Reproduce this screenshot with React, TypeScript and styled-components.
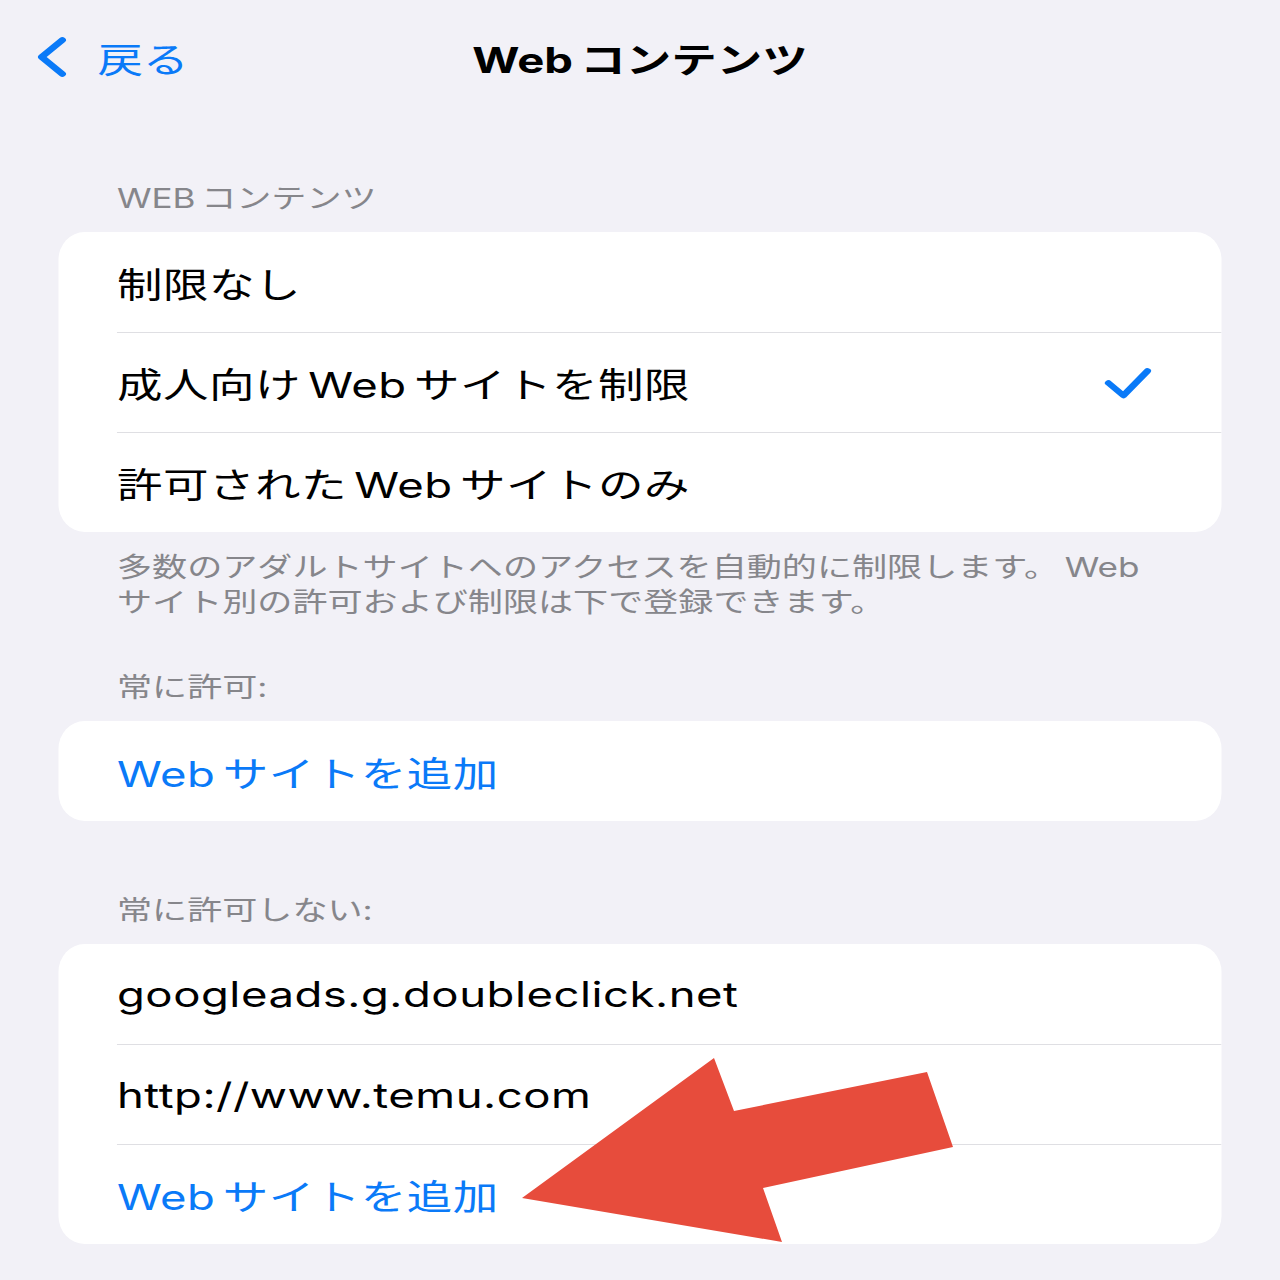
import React from 'react';
import styled, { createGlobalStyle } from 'styled-components';

// The settings screen is laid out at phone width and stretched across the page.
const SCREEN_WIDTH = 985;
const STRETCH = 1280 / SCREEN_WIDTH;

const BLUE = '#0a7af8';
const GRAY = '#86868b';

const GlobalStyle = createGlobalStyle`
  html, body {
    margin: 0;
    padding: 0;
    background: #f2f1f7;
  }
  body {
    overflow: hidden;
  }
`;

const Page = styled.div`
  position: relative;
  width: 1280px;
  height: 1280px;
  overflow: hidden;
  background: #f2f1f7;
`;

const Screen = styled.div`
  width: ${SCREEN_WIDTH}px;
  height: 1280px;
  transform: scaleX(${STRETCH});
  transform-origin: 0 0;
  font-family: Inter, 'Noto Sans CJK JP', sans-serif;
  color: #000;
`;

const NavBar = styled.header`
  display: grid;
  grid-template-columns: 1fr auto 1fr;
  align-items: center;
  height: 114px;
  padding: 0 27px;
`;

const BackButton = styled.button`
  justify-self: start;
  display: flex;
  align-items: center;
  gap: 22px;
  padding: 0;
  border: 0;
  background: none;
  color: ${BLUE};
  font: 400 35px 'Noto Sans CJK JP', sans-serif;
`;

const Title = styled.h1`
  margin: 0;
  font-size: 35px;
  font-weight: 700;
`;

const Content = styled.main`
  display: flex;
  flex-direction: column;
  padding: 68px 45px 0;
`;

const Section = styled.section<{ $gap: number }>`
  margin-bottom: ${({ $gap }) => $gap}px;
`;

const SectionHeader = styled.div`
  padding: 0 45px 16px;
  font-size: 27px;
  line-height: 34px;
  color: ${GRAY};
`;

const SectionFooter = styled.p`
  margin: 0;
  padding: 18px 45px 0;
  font-size: 27px;
  line-height: 35px;
  color: ${GRAY};
  white-space: nowrap;
`;

const Card = styled.div`
  background: #fff;
  border-radius: 20px / 28px;
  overflow: hidden;
`;

const Row = styled.div<{ $action?: boolean }>`
  display: flex;
  align-items: center;
  justify-content: space-between;
  box-sizing: border-box;
  height: 100px;
  margin-left: 45px;
  padding-right: 53px;
  font-size: 35px;
  letter-spacing: 0.4px;
  color: ${({ $action }) => ($action ? BLUE : '#000')};

  & + & {
    border-top: 1.5px solid #dfdfe3;
  }
`;

// Latin words inside Japanese text get a little air on the sides touching kana
const Latin = styled.span<{ $lead: boolean; $trail: boolean }>`
  margin-left: ${({ $lead }) => ($lead ? '0.16em' : '0')};
  margin-right: ${({ $trail }) => ($trail ? '0.16em' : '0')};
`;

const Arrow = styled.svg`
  position: absolute;
  left: 515px;
  top: 1050px;
`;

function spaced(text: string) {
  const parts = text.split(/([A-Za-z]+)/).filter(Boolean);
  return parts.map((part, i) =>
    /^[A-Za-z]+$/.test(part) ? (
      <Latin key={i} $lead={i > 0} $trail={i < parts.length - 1}>
        {part}
      </Latin>
    ) : (
      <React.Fragment key={i}>{part}</React.Fragment>
    )
  );
}

const ChevronLeft = () => (
  <svg width="26" height="42" viewBox="0 0 26 42">
    <path d="M21 4 L5 21 L21 38" fill="none" stroke={BLUE} strokeWidth="5.5" strokeLinecap="round" strokeLinejoin="round" />
  </svg>
);

const Check = () => (
  <svg width="38" height="34" viewBox="0 0 38 34">
    <path d="M4 17 L15.5 29.5 L34 5" fill="none" stroke={BLUE} strokeWidth="5.5" strokeLinecap="round" strokeLinejoin="round" />
  </svg>
);

const FILTER_OPTIONS = ['制限なし', '成人向けWebサイトを制限', '許可されたWebサイトのみ'];
const SELECTED_OPTION = 1;
const BLOCKED_SITES = ['googleads.g.doubleclick.net', 'http://www.temu.com'];

const AddSiteRow = () => (
  <Row $action>
    <span>{spaced('Webサイトを追加')}</span>
  </Row>
);

export default function App() {
  return (
    <Page>
      <GlobalStyle />
      <Screen>
        <NavBar>
          <BackButton>
            <ChevronLeft />
            戻る
          </BackButton>
          <Title>{spaced('Webコンテンツ')}</Title>
        </NavBar>

        <Content>
          <Section $gap={51}>
            <SectionHeader>{spaced('WEBコンテンツ')}</SectionHeader>
            <Card>
              {FILTER_OPTIONS.map((label, i) => (
                <Row key={label}>
                  <span>{spaced(label)}</span>
                  {i === SELECTED_OPTION && <Check />}
                </Row>
              ))}
            </Card>
            <SectionFooter>
              {spaced('多数のアダルトサイトへのアクセスを自動的に制限します。Web')}
              <br />
              サイト別の許可および制限は下で登録できます。
            </SectionFooter>
          </Section>

          <Section $gap={73}>
            <SectionHeader>常に許可:</SectionHeader>
            <Card>
              <AddSiteRow />
            </Card>
          </Section>

          <Section $gap={0}>
            <SectionHeader>常に許可しない:</SectionHeader>
            <Card>
              {BLOCKED_SITES.map((site) => (
                <Row key={site}>
                  <span>{site}</span>
                </Row>
              ))}
              <AddSiteRow />
            </Card>
          </Section>
        </Content>
      </Screen>

      <Arrow width="445" height="200" viewBox="0 0 445 200">
        <polygon points="7,148 199,8 219,61 412,22 438,97 248,138 267,192" fill="#e74c3c" />
      </Arrow>
    </Page>
  );
}
